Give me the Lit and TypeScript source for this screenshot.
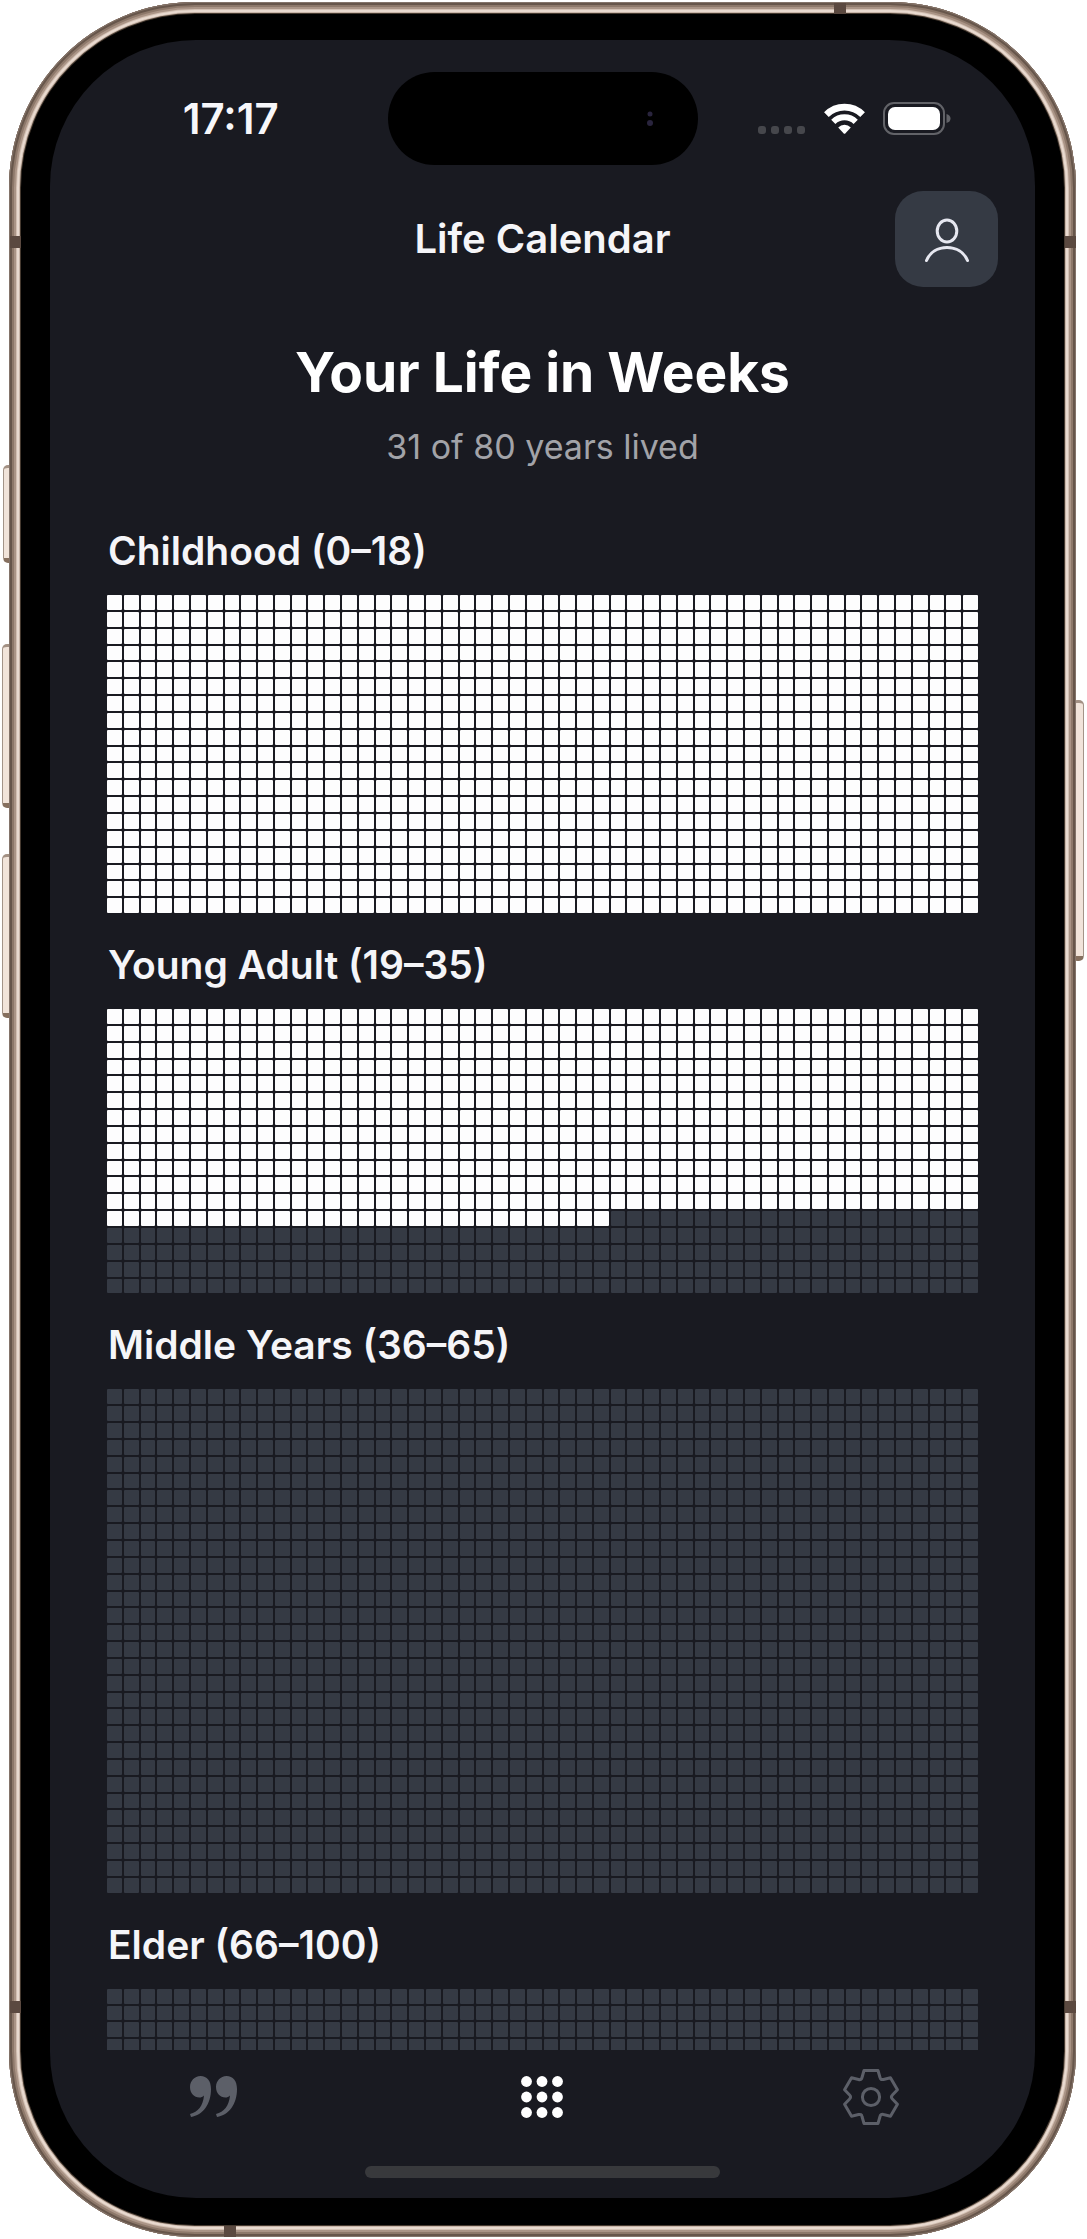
import { LitElement, html, svg, css } from "lit";
import { customElement, property, state } from "lit/decorators.js";
import { classMap } from "lit/directives/class-map.js";

const WEEKS_PER_YEAR = 52;

interface Stage {
  name: string;
  from: number;
  to: number;
}

const STAGES: Stage[] = [
  { name: "Childhood", from: 0, to: 18 },
  { name: "Young Adult", from: 19, to: 35 },
  { name: "Middle Years", from: 36, to: 65 },
  { name: "Elder", from: 66, to: 100 },
];

/** Outline of a six-toothed cog centred on the origin. */
function cogPath(): string {
  const turn = (x: number, y: number, deg: number) => {
    const a = (deg * Math.PI) / 180;
    return `${(x * Math.cos(a) - y * Math.sin(a)).toFixed(2)} ${(x * Math.sin(a) + y * Math.cos(a)).toFixed(2)}`;
  };
  let d = "";
  for (let i = 0; i < 6; i++) {
    const a = i * 60;
    d += `${i === 0 ? "M" : "L"}${turn(-7, -26.5, a)}L${turn(7, -26.5, a)}L${turn(9, -19.5, a)}`;
    d += `Q${turn(9.6, -16.8, a)} ${turn(-9, -19.5, a + 60)}`;
  }
  return d + "Z";
}

@customElement("week-grid")
export class WeekGrid extends LitElement {
  @property({ type: Number }) years = 0;
  @property({ type: Number }) lived = 0;

  static styles = css`
    :host {
      display: block;
    }
    .grid {
      display: grid;
      grid-template-columns: repeat(52, minmax(0, 1fr));
      gap: 2px;
    }
    .week {
      border-radius: 1px;
      background: #353a44;
    }
    /* The first week of each year sets the height of its row. */
    .week:nth-child(52n + 1) {
      aspect-ratio: 224 / 225;
    }
    .past {
      background: #fdfdfe;
    }
  `;

  render() {
    const cells = Array.from({ length: this.years * WEEKS_PER_YEAR }, (_, i) => i);
    return html`<div class="grid" role="img" aria-label="${this.lived} weeks lived">
      ${cells.map((i) => html`<div class=${classMap({ week: true, past: i < this.lived })}></div>`)}
    </div>`;
  }
}

@customElement("status-bar")
export class StatusBar extends LitElement {
  static styles = css`
    :host {
      display: grid;
      grid-template-columns: 1fr 310px 1fr;
      align-items: center;
      padding: 32px 24px 0;
    }
    .time {
      text-align: center;
      font-size: 42px;
      line-height: 48px;
      font-weight: 600;
      color: #f7f7fa;
    }
    .island {
      display: flex;
      align-items: center;
      justify-content: flex-end;
      height: 93px;
      padding-right: 44px;
      box-sizing: border-box;
      border-radius: 47px;
      background: #000;
    }
    .signals {
      display: flex;
      align-items: center;
      justify-content: center;
      gap: 18px;
    }
    svg {
      display: block;
    }
  `;

  render() {
    return html`
      <time class="time">17:17</time>
      <div class="island">
        <svg width="8" height="18" viewBox="0 0 8 18" aria-hidden="true">
          <circle cx="4" cy="4" r="2.5" fill="#29243d" />
          <circle cx="4" cy="13" r="3" fill="#29243d" />
        </svg>
      </div>
      <div class="signals">
        <svg width="48" height="32" viewBox="0 0 48 32" aria-hidden="true">
          ${[4, 17, 30, 43].map((x) => svg`<rect x=${x - 4} y="23" width="8" height="8" rx="3" fill="#46474c" />`)}
        </svg>
        <svg width="41" height="32" viewBox="0 0 41 32" aria-hidden="true">
          <g fill="none" stroke="#fff">
            <path d="M2.4 11.6 A25.6 25.6 0 0 1 38.6 11.6" stroke-width="6.6" />
            <path d="M9.3 18.9 A16 16 0 0 1 31.7 18.9" stroke-width="6" />
          </g>
          <path d="M14.2 24.4 A9 9 0 0 1 26.8 24.4 L21.5 30.2 Q20.5 31.2 19.5 30.2 Z" fill="#fff" />
        </svg>
        <svg width="68" height="34" viewBox="0 0 68 34" aria-hidden="true">
          <rect x="1" y="1" width="60" height="31" rx="10" fill="none" stroke="#626368" stroke-width="2" />
          <rect x="5" y="5" width="52" height="23" rx="7" fill="#fff" />
          <path d="M63.5 12 Q67.5 13 67.5 16.5 Q67.5 20 63.5 21 Z" fill="#626368" />
        </svg>
      </div>
    `;
  }
}

@customElement("app-root")
export class AppRoot extends LitElement {
  @state() private tab = "calendar";
  private weeksLived = 31 * WEEKS_PER_YEAR + 30;

  static styles = css`
    :host {
      display: block;
      font-family: Inter, "Liberation Sans", sans-serif;
      background: #fff;
    }
    .stage {
      position: relative;
      z-index: 0;
      box-sizing: border-box;
      height: 100vh;
      padding: 2px 11px 2px 9px;
    }
    .phone {
      position: relative;
      box-sizing: border-box;
      height: 100%;
      padding: 38px 41px 39px 41px;
      border-radius: 186px;
      background: #000;
      box-shadow:
        inset 0 0 0 1px #84746a,
        inset 0 0 0 3px #67564b,
        inset 0 0 0 5px #8d786a,
        inset 0 0 0 7px #aa9486,
        inset 0 0 0 8px #d3c0b3,
        inset 0 0 0 10px #e9dad0,
        inset 0 0 0 11px #c9b6a9,
        inset 0 0 0 12px #45392f;
    }
    .key {
      position: absolute;
      z-index: -1;
      box-sizing: border-box;
      width: 12px;
      border: 1px solid #a39488;
      border-top: 3px solid #a39184;
      border-bottom: 5px solid #86705f;
      border-radius: 5px;
      background: #f1e4da;
    }
    .action {
      left: -6px;
      top: 463px;
      height: 98px;
    }
    .volume-up {
      left: -7px;
      top: 642px;
      height: 164px;
    }
    .volume-down {
      left: -7px;
      top: 852px;
      height: 164px;
    }
    .power {
      right: -8px;
      top: 698px;
      height: 261px;
    }
    .band {
      position: absolute;
      background: #5b4940;
    }
    .side {
      width: 11px;
      height: 12px;
    }
    .left {
      left: 1px;
    }
    .right {
      right: 0;
    }
    .upper {
      top: 234px;
    }
    .lower {
      bottom: 224px;
    }
    .cap {
      width: 12px;
      height: 11px;
    }
    .top {
      top: 1px;
      right: 230px;
    }
    .bottom {
      bottom: 0;
      left: 215px;
    }
    .screen {
      display: flex;
      flex-direction: column;
      height: 100%;
      overflow: hidden;
      border-radius: 146px;
      background: #191a21;
      color: #f5f5f8;
    }
    .header {
      display: grid;
      grid-template-columns: 1fr auto 1fr;
      align-items: center;
      padding: 26px 37px 0;
    }
    .heading {
      grid-column: 2;
      margin: 0;
      font-size: 40px;
      line-height: 48px;
      font-weight: 600;
    }
    .profile {
      justify-self: end;
      display: grid;
      place-items: center;
      width: 103px;
      height: 96px;
      padding: 4px 0 0;
      border: 0;
      border-radius: 28px;
      background: #353a44;
      cursor: pointer;
    }
    .content {
      flex: 1;
      min-height: 0;
      overflow-y: auto;
      scrollbar-width: none;
      padding: 49px 57px 0;
    }
    .summary {
      text-align: center;
    }
    .title {
      margin: 0 0 17px;
      font-size: 55px;
      line-height: 72px;
      font-weight: 700;
      color: #fff;
    }
    .sub {
      margin: 0 0 58px;
      font-size: 34px;
      line-height: 44px;
      color: #a2a3a8;
    }
    .life-stage {
      margin-bottom: 28px;
    }
    .name {
      margin: 0 0 20px;
      padding-left: 1px;
      font-size: 39px;
      line-height: 48px;
      font-weight: 600;
    }
    .tabs {
      display: grid;
      grid-template-columns: repeat(3, 1fr);
      height: 94px;
    }
    .tab {
      display: grid;
      place-items: center;
      padding: 0;
      border: 0;
      background: none;
      color: #5c5f68;
      cursor: pointer;
    }
    .active {
      color: #fff;
    }
    .home {
      width: 36%;
      height: 12px;
      margin: 22px auto 20px;
      flex: none;
      border-radius: 6px;
      background: #38393c;
    }
    svg {
      display: block;
    }
  `;

  private icon(name: string) {
    if (name === "quotes") {
      const mark = "M10.5 0 C17 0 21 5 21 13 C21 28 13 39 1 41 L0 38 C8 36 13 30 14 19.5 C12.5 21 11 21.5 9.5 21.5 C4 21.5 0 17 0 11 C0 5 4.5 0 10.5 0 Z";
      return svg`<svg width="48" height="42" viewBox="0 0 48 42" fill="currentColor" aria-hidden="true">
        <path d=${mark} /><path d=${mark} transform="translate(26 0)" />
      </svg>`;
    }
    if (name === "calendar") {
      return svg`<svg width="44" height="44" viewBox="0 0 44 44" fill="currentColor" aria-hidden="true">
        ${[6.5, 22, 37.5].map((y) => [6.5, 22, 37.5].map((x) => svg`<circle cx=${x} cy=${y} r="5.4" />`))}
      </svg>`;
    }
    return svg`<svg width="58" height="58" viewBox="-29 -29 58 58" fill="none" stroke="currentColor" stroke-width="3" stroke-linejoin="round" aria-hidden="true">
      <path d=${cogPath()} /><circle r="8.6" />
    </svg>`;
  }

  private renderTab(name: string, label: string) {
    const active = this.tab === name;
    return html`<button
      class=${classMap({ tab: true, active })}
      aria-label=${label}
      aria-pressed=${active}
      @click=${() => (this.tab = name)}
    >${this.icon(name)}</button>`;
  }

  render() {
    return html`
      <div class="stage">
        <div class="phone">
          <div class="key action"></div>
          <div class="key volume-up"></div>
          <div class="key volume-down"></div>
          <div class="key power"></div>
          <div class="band side left upper"></div>
          <div class="band side left lower"></div>
          <div class="band side right upper"></div>
          <div class="band side right lower"></div>
          <div class="band cap top"></div>
          <div class="band cap bottom"></div>
          <div class="screen">
            <status-bar></status-bar>
            <header class="header">
              <h2 class="heading">Life Calendar</h2>
              <button class="profile" aria-label="Profile">
                <svg width="46" height="46" viewBox="0 0 46 46" fill="none" stroke="#e6e7f0" stroke-width="3" stroke-linecap="round" aria-hidden="true">
                  <ellipse cx="23" cy="13" rx="9.8" ry="11" />
                  <path d="M2.5 42.5 C6 34 14 29.5 23 29.5 C32 29.5 40 34 43.5 42.5" />
                </svg>
              </button>
            </header>
            <main class="content">
              <div class="summary">
                <h1 class="title">Your Life in Weeks</h1>
                <p class="sub">31 of 80 years lived</p>
              </div>
              ${STAGES.map((s) => {
                const years = s.to - s.from + 1;
                const lived = Math.max(0, Math.min(years * WEEKS_PER_YEAR, this.weeksLived - s.from * WEEKS_PER_YEAR));
                return html`<section class="life-stage">
                  <h3 class="name">${s.name} (${s.from}–${s.to})</h3>
                  <week-grid .years=${years} .lived=${lived}></week-grid>
                </section>`;
              })}
            </main>
            <nav class="tabs">
              ${this.renderTab("quotes", "Quotes")}
              ${this.renderTab("calendar", "Calendar")}
              ${this.renderTab("settings", "Settings")}
            </nav>
            <div class="home"></div>
          </div>
        </div>
      </div>
    `;
  }
}
